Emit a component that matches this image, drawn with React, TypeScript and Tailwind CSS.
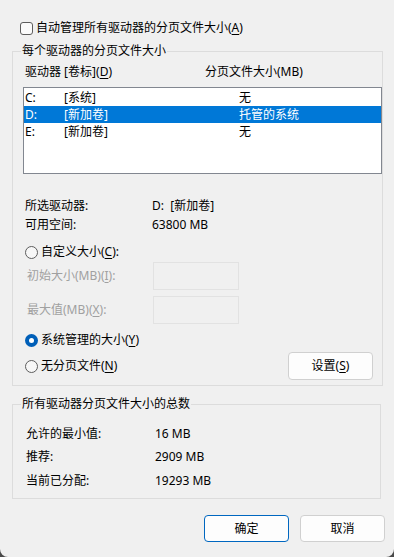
import React from 'react';

const font = "font-['Noto_Sans','Noto_Sans_CJK_SC',sans-serif]";

function U({ children }: { children: React.ReactNode }) {
  return <span className="underline underline-offset-[2px]">{children}</span>;
}

function Radio({ checked }: { checked?: boolean }) {
  if (checked) {
    return (
      <span className="flex h-[13px] w-[13px] items-center justify-center rounded-full bg-[#005fb8]">
        <span className="h-[5px] w-[5px] rounded-full bg-white" />
      </span>
    );
  }
  return <span className="h-[13px] w-[13px] rounded-full border border-[#5d5d5d] bg-[#f7f7f7]" />;
}

const drives = [
  { letter: 'C:', label: '[系统]', size: '无', selected: false },
  { letter: 'D:', label: '[新加卷]', size: '托管的系统', selected: true },
  { letter: 'E:', label: '[新加卷]', size: '无', selected: false },
];

export default function App() {
  return (
    <div className={`h-[557px] w-[394px] overflow-hidden bg-[#4a4a4a] text-[12px] leading-[16px] text-black ${font}`}>
      <div className="flex h-full w-full flex-col rounded-b-[8px] bg-[#f0f0f0]">
        {/* top checkbox */}
        <div className="ml-[20px] mt-[21px] flex h-[14px] items-center gap-[3px]">
          <span className="h-[13px] w-[13px] rounded-[3px] border border-[#5d5d5d] bg-[#fbfbfb]" />
          <span>
            自动管理所有驱动器的分页文件大小(<U>A</U>)
          </span>
        </div>

        {/* per-drive group */}
        <fieldset className="ml-[12px] mt-[9px] h-[342px] w-[370px] border border-[#dcdcdc]">
          <legend className="ml-[8px] px-[1px] leading-[14px]">每个驱动器的分页文件大小</legend>

          <div className="mt-[6px] flex h-[16px] items-center">
            <span className="ml-[12px] w-[180px]">
              驱动器 [卷标](<U>D</U>)
            </span>
            <span>分页文件大小(MB)</span>
          </div>

          <div className="ml-[10px] mt-[7px] h-[87px] w-[359px] border border-[#828790] bg-white pt-[1px]">
            {drives.map((d) => (
              <div
                key={d.letter}
                className={`flex h-[17px] items-center ${d.selected ? 'bg-[#0078d7] text-white' : ''}`}
              >
                <span className="ml-[1px] w-[39px]">{d.letter}</span>
                <span className="w-[175px]">{d.label}</span>
                <span>{d.size}</span>
              </div>
            ))}
          </div>

          <div className="ml-[12px] mt-[22px] flex flex-col">
            <div className="flex h-[19px] items-center">
              <span className="w-[127px]">所选驱动器:</span>
              <span>D:&nbsp;&nbsp;[新加卷]</span>
            </div>
            <div className="flex h-[19px] items-center">
              <span className="w-[127px]">可用空间:</span>
              <span>63800 MB</span>
            </div>
          </div>

          <div className="ml-[12px] mt-[10px] flex h-[16px] items-center gap-[3px]">
            <Radio />
            <span>
              自定义大小(<U>C</U>):
            </span>
          </div>

          <div className="ml-[14px] mt-[2px] flex flex-col gap-[6px] text-[#a0a0a0]">
            <div className="flex h-[28px] items-center">
              <span className="w-[126px]">
                初始大小(MB)(<U>I</U>):
              </span>
              <span className="h-[28px] w-[86px] border border-[#e2e2e2]" />
            </div>
            <div className="flex h-[28px] items-center">
              <span className="w-[126px]">
                最大值(MB)(<U>X</U>):
              </span>
              <span className="h-[28px] w-[86px] border border-[#e2e2e2]" />
            </div>
          </div>

          <div className="ml-[12px] mt-[8px] flex h-[16px] items-center gap-[3px]">
            <Radio checked />
            <span>
              系统管理的大小(<U>Y</U>)
            </span>
          </div>

          <div className="ml-[12px] mt-[4px] flex items-center">
            <div className="flex items-center gap-[3px]">
              <Radio />
              <span>
                无分页文件(<U>N</U>)
              </span>
            </div>
            <button className="ml-auto mr-[9px] flex h-[28px] w-[85px] items-center justify-center rounded-[4px] border border-[#d0d0d0] bg-[#fdfdfd]">
              设置(<U>S</U>)
            </button>
          </div>
        </fieldset>

        {/* totals group */}
        <fieldset className="ml-[12px] mt-[11px] h-[102px] w-[369px] border border-[#dcdcdc]">
          <legend className="ml-[8px] px-[1px] leading-[14px]">所有驱动器分页文件大小的总数</legend>
          <div className="ml-[13px] mt-[11px] flex flex-col">
            {[
              ['允许的最小值:', '16 MB'],
              ['推荐:', '2909 MB'],
              ['当前已分配:', '19293 MB'],
            ].map(([k, v]) => (
              <div key={k} className="flex h-[23.5px] items-center">
                <span className="w-[129px]">{k}</span>
                <span>{v}</span>
              </div>
            ))}
          </div>
        </fieldset>

        {/* dialog buttons */}
        <div className="ml-[204px] mt-[16px] flex gap-[11px]">
          <button className="flex h-[27px] w-[85px] items-center justify-center rounded-[4px] border border-[#0067c0] bg-[#fdfdfd]">
            确定
          </button>
          <button className="flex h-[27px] w-[85px] items-center justify-center rounded-[4px] border border-[#d0d0d0] bg-[#fdfdfd]">
            取消
          </button>
        </div>
      </div>
    </div>
  );
}
